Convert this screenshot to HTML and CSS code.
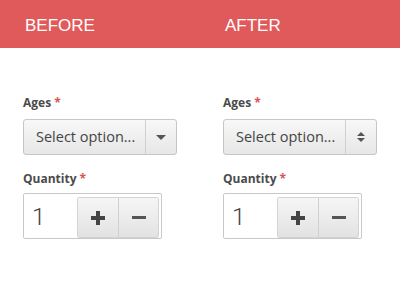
FILE: index.html
```html
<!DOCTYPE html>
<html>
<head>
<meta charset="utf-8">
<link rel="stylesheet" href="styles.css">
</head>
<body>
<header class="bar">
  <div class="bar-col">BEFORE</div>
  <div class="bar-col">AFTER</div>
</header>
<main class="cols">
  <section class="col">
    <label class="lbl">Ages <span class="req">*</span></label>
    <div class="select">
      <span class="select-text">Select option...</span>
      <span class="select-btn"><span class="caret"></span></span>
    </div>
    <label class="lbl lbl-q">Quantity <span class="req">*</span></label>
    <div class="qty">
      <span class="qty-val">1</span>
      <div class="qty-btns">
        <button class="qbtn"><span class="plus"></span></button>
        <button class="qbtn"><span class="minus"></span></button>
      </div>
    </div>
  </section>
  <section class="col">
    <label class="lbl">Ages <span class="req">*</span></label>
    <div class="select">
      <span class="select-text">Select option...</span>
      <span class="select-btn"><span class="updown"><span class="up"></span><span class="down"></span></span></span>
    </div>
    <label class="lbl lbl-q">Quantity <span class="req">*</span></label>
    <div class="qty">
      <span class="qty-val">1</span>
      <div class="qty-btns">
        <button class="qbtn"><span class="plus"></span></button>
        <button class="qbtn"><span class="minus"></span></button>
      </div>
    </div>
  </section>
</main>
</body>
</html>
```
FILE: styles.css
```css
html, body { margin: 0; padding: 0; background: #fff; }
body { width: 400px; height: 300px; overflow: hidden; font-family: "Open Sans", sans-serif; }

.bar { display: flex; height: 48px; background: #e05a5b; }
.bar-col { width: 200px; padding: 16px 0 0 25px; box-sizing: border-box; color: #fff; font-family: "Liberation Sans", Arial, sans-serif; font-size: 17px; line-height: 20px; }

.cols { display: flex; padding-top: 47px; }
.col { width: 200px; padding-left: 23px; box-sizing: border-box; display: flex; flex-direction: column; align-items: flex-start; }

.lbl { font-size: 12px; line-height: 16px; font-weight: bold; color: #4b4b4b; margin-bottom: 8px; }
.lbl-q { margin-top: 16px; margin-bottom: 6px; }
.req { color: #d9534f; }

.select { display: flex; width: 154px; height: 36px; box-sizing: border-box; border: 1px solid #c6c6c6; border-radius: 3px; background: linear-gradient(#f8f8f8, #e7e7e7); }
.select-text { flex: 1; padding-left: 12px; font-size: 14.5px; line-height: 34px; color: #444; }
.select-btn { width: 30px; border-left: 1px solid #cfcfcf; display: flex; align-items: center; justify-content: center; }
.caret { width: 0; height: 0; border-left: 5px solid transparent; border-right: 5px solid transparent; border-top: 5px solid #555; margin-top: 1px; }
.updown { display: flex; flex-direction: column; align-items: center; gap: 2px; }
.up { width: 0; height: 0; border-left: 4px solid transparent; border-right: 4px solid transparent; border-bottom: 4px solid #555; }
.down { width: 0; height: 0; border-left: 4px solid transparent; border-right: 4px solid transparent; border-top: 4px solid #555; }

.qty { display: flex; align-items: center; width: 139px; height: 46px; box-sizing: border-box; border: 1px solid #c8c8c8; border-radius: 2px; padding: 3px 2px 2px 0; }
.qty-val { flex: 1; padding-left: 8px; font-family: Roboto, "Liberation Sans", sans-serif; font-size: 24px; font-weight: 300; color: #444; line-height: 24px; }
.qty-btns { display: flex; height: 39px; align-self: flex-start; border: 1px solid #d4d4d4; border-radius: 2px; overflow: hidden; }
.qbtn { width: 40px; height: 100%; margin: 0; padding: 0; border: 0; background: linear-gradient(#f6f6f6, #e2e2e2); display: flex; align-items: center; justify-content: center; }
.qbtn + .qbtn { border-left: 1px solid #cfcfcf; }
.plus { position: relative; width: 14px; height: 14px; }
.plus::before, .plus::after { content: ""; position: absolute; background: #444; }
.plus::before { left: 0; top: 5px; width: 14px; height: 4px; }
.plus::after { left: 5px; top: 0; width: 4px; height: 14px; }
.minus { width: 14px; height: 3px; background: #555; }
```
